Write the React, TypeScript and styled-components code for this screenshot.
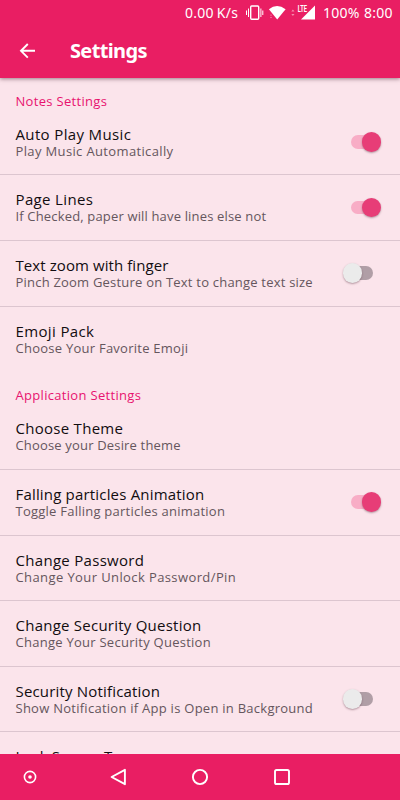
import React from "react";
import styled, { createGlobalStyle } from "styled-components";

const GlobalStyle = createGlobalStyle`
  * { box-sizing: border-box; }
  body { margin: 0; background: #fbe4eb; overflow: hidden; }
`;

const Screen = styled.div`
  display: flex;
  flex-direction: column;
  width: 400px;
  height: 800px;
  overflow: hidden;
  background: #fbe4eb;
  font-family: "Open Sans", "Noto Sans", sans-serif;
`;

const Header = styled.header`
  flex: none;
  height: 77.5px;
  background: #e91e63;
  color: #fff;
  box-shadow: 0 1px 4px rgba(60, 20, 35, 0.5);
  z-index: 1;
`;

const StatusBar = styled.div`
  display: flex;
  align-items: center;
  height: 25px;
  padding-left: 185px;
`;

const StatusText = styled.span<{ $width: number }>`
  width: ${(p) => p.$width}px;
  font: 14px/24px "Noto Sans", sans-serif;
  letter-spacing: 0.27px;
  word-spacing: -1px;
  white-space: nowrap;
`;

const StatusIcons = styled.svg`
  flex: none;
  width: 77px;
  height: 24px;
  display: block;
`;

const TitleBar = styled.div`
  display: flex;
  align-items: center;
  height: 52px;
  padding-left: 19px;
`;

const BackIcon = styled.svg`
  width: 17px;
  height: 18px;
  margin-right: 34px;
`;

const Title = styled.h1`
  margin: 0;
  font: 700 20px/28px "Noto Sans", sans-serif;
  letter-spacing: -0.65px;
`;

const List = styled.main`
  flex: 1;
  min-height: 0;
  overflow: hidden;
`;

const Category = styled.h2<{ $track: number }>`
  margin: 0;
  height: 32.3px;
  padding: 13px 0 0 15.5px;
  font-size: 13px;
  font-weight: 400;
  line-height: 20px;
  letter-spacing: ${(p) => p.$track}px;
  color: #e8136f;
`;

const Row = styled.div<{ $last?: boolean }>`
  display: flex;
  justify-content: space-between;
  height: 65.6px;
  padding: 15px 16px 0 15.5px;
  border-bottom: 1px solid ${(p) => (p.$last ? "transparent" : "#dcc5cf")};
`;

const Labels = styled.div`
  white-space: nowrap;
`;

const Name = styled.div<{ $track: number }>`
  font-size: 15px;
  line-height: 19px;
  letter-spacing: ${(p) => p.$track}px;
  color: #120d10;
`;

const Summary = styled.div<{ $track: number }>`
  font-size: 13px;
  line-height: 15px;
  letter-spacing: ${(p) => p.$track}px;
  color: #65565d;
`;

const Track = styled.div<{ $on: boolean }>`
  display: flex;
  align-items: center;
  justify-content: ${(p) => (p.$on ? "flex-end" : "flex-start")};
  width: 23px;
  height: 13.5px;
  margin: 10.4px ${(p) => (p.$on ? 10.5 : 11)}px 0 0;
  border-radius: 7px;
  background: ${(p) => (p.$on ? "#f8adc6" : "#b09ea6")};
`;

const Thumb = styled.div<{ $on: boolean }>`
  flex: none;
  width: 19.5px;
  height: 19.5px;
  margin: ${(p) => (p.$on ? "0 -7.5px 0 0" : "0 0 0 -7.5px")};
  border-radius: 50%;
  background: ${(p) => (p.$on ? "#e73d77" : "#ebebeb")};
  box-shadow: 0 1px 2px rgba(70, 30, 45, 0.4);
`;

const NavBar = styled.nav`
  flex: none;
  display: grid;
  grid-template-columns: 60px 116px 48px 116px;
  align-items: center;
  justify-items: center;
  height: 46.5px;
  background: #e91e63;
`;

const NavIcon = styled.svg`
  display: block;
  width: 20px;
  height: 20px;
  fill: none;
  stroke: #fff;
  stroke-width: 1.9;
  stroke-linejoin: round;
`;

interface Setting {
  name: string;
  nameTrack: number;
  summary: string;
  summaryTrack: number;
  on?: boolean;
}

interface Group {
  title: string;
  track: number;
  items: Setting[];
}

const groups: Group[] = [
  {
    title: "Notes Settings",
    track: 0.31,
    items: [
      { name: "Auto Play Music", nameTrack: 0.36, summary: "Play Music Automatically", summaryTrack: 0.36, on: true },
      { name: "Page Lines", nameTrack: 0.36, summary: "If Checked, paper will have lines else not", summaryTrack: 0.16, on: true },
      { name: "Text zoom with finger", nameTrack: 0.08, summary: "Pinch Zoom Gesture on Text to change text size", summaryTrack: 0.21, on: false },
      { name: "Emoji Pack", nameTrack: 0.37, summary: "Choose Your Favorite Emoji", summaryTrack: 0.25 },
    ],
  },
  {
    title: "Application Settings",
    track: 0.31,
    items: [
      { name: "Choose Theme", nameTrack: 0.28, summary: "Choose your Desire theme", summaryTrack: 0.17 },
      { name: "Falling particles Animation", nameTrack: 0.18, summary: "Toggle Falling particles animation", summaryTrack: 0.24, on: true },
      { name: "Change Password", nameTrack: 0.3, summary: "Change Your Unlock Password/Pin", summaryTrack: 0.4 },
      { name: "Change Security Question", nameTrack: 0.24, summary: "Change Your Security Question", summaryTrack: 0.26 },
      { name: "Security Notification", nameTrack: 0.18, summary: "Show Notification if App is Open in Background", summaryTrack: 0.26, on: false },
      { name: "Lock Screen Type", nameTrack: 0.11, summary: "Choose Lock Screen Type", summaryTrack: 0.2 },
    ],
  },
];

function Switch({ on }: { on: boolean }) {
  return (
    <Track $on={on}>
      <Thumb $on={on} />
    </Track>
  );
}

export default function App() {
  return (
    <Screen>
      <GlobalStyle />
      <Header>
        <StatusBar>
          <StatusText $width={61}>0.00 K/s</StatusText>
          <StatusIcons viewBox="246 0 77 24">
            <g fill="none" stroke="#fff" strokeWidth="1">
              <rect x="250.7" y="5" width="8" height="13.2" rx="1" strokeWidth="1.4" />
              <path d="M248.5 7.5v8.5M260.9 7.5v8.5M246.5 9.5v4.5M262.8 9.5v4.5" />
            </g>
            <path d="M268.9 8.2Q277 2 285.6 8.2L277.2 18.5Z" fill="#fff" />
            <path d="M315 4.5V18.5H301Z" fill="#fff" />
            <g fill="#f58bae">
              <path d="M270 14.5l1-1.3 1 1.3zM270 16l1 1.3 1-1.3zM291.3 10.5l1.6-2 1.6 2zM291.3 13l1.6 2 1.6-2z" />
            </g>
            <text x="297.8" y="10.6" fill="#fff" fontFamily="Roboto" fontSize="8.2" fontWeight="700" textLength="9.2" lengthAdjust="spacingAndGlyphs">LTE</text>
          </StatusIcons>
          <StatusText $width={41}>100%</StatusText>
          <StatusText $width={30}>8:00</StatusText>
        </StatusBar>
        <TitleBar>
          <BackIcon viewBox="0 0 17 18" fill="none" stroke="#fff" strokeWidth="1.9">
            <path d="M16 8.8H2M8.8 2L2 8.8L8.8 15.6" />
          </BackIcon>
          <Title>Settings</Title>
        </TitleBar>
      </Header>
      <List>
        {groups.map((group) => (
          <section key={group.title}>
            <Category $track={group.track}>{group.title}</Category>
            {group.items.map((item, i) => (
              <Row key={item.name} $last={i === group.items.length - 1}>
                <Labels>
                  <Name $track={item.nameTrack}>{item.name}</Name>
                  <Summary $track={item.summaryTrack}>{item.summary}</Summary>
                </Labels>
                {item.on !== undefined && <Switch on={item.on} />}
              </Row>
            ))}
          </section>
        ))}
      </List>
      <NavBar>
        <NavIcon viewBox="0 0 20 20">
          <circle cx="10" cy="10" r="5.6" strokeWidth="1.6" />
          <circle cx="10" cy="10" r="1.8" fill="#fff" stroke="none" />
        </NavIcon>
        <NavIcon viewBox="0 0 20 20">
          <path d="M3.6 10L16.9 2.8V17.2Z" />
        </NavIcon>
        <NavIcon viewBox="0 0 20 20">
          <circle cx="10" cy="10" r="7.1" />
        </NavIcon>
        <NavIcon viewBox="0 0 20 20">
          <rect x="3" y="3" width="14" height="14" rx="1.6" />
        </NavIcon>
      </NavBar>
    </Screen>
  );
}
